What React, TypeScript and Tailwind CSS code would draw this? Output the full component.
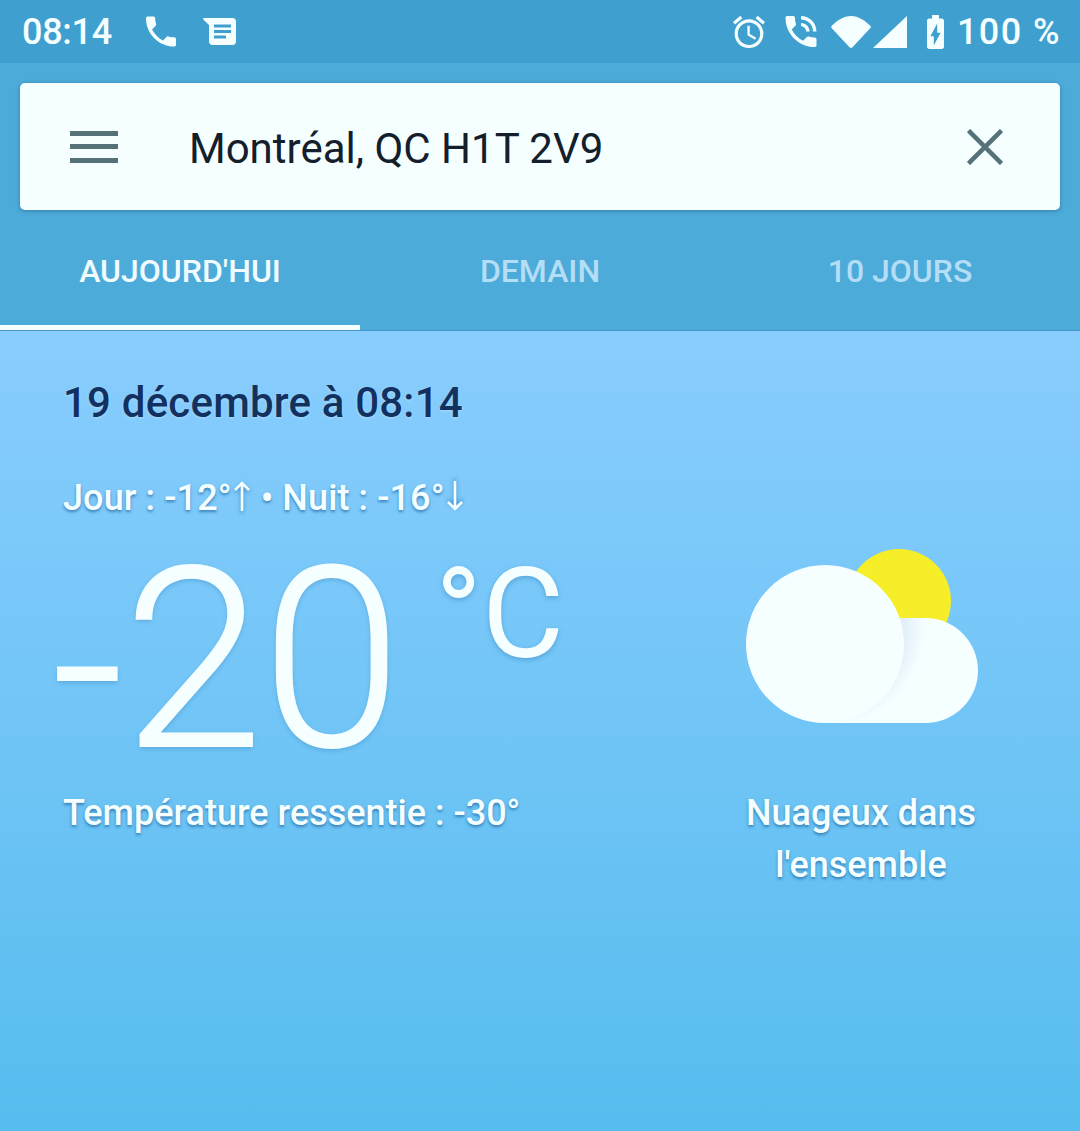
// Weather screen - Montréal, today tab

const TABS = ['AUJOURD\'HUI', 'DEMAIN', '10 JOURS']

function StatusBar() {
  return (
    <div className="flex h-[63px] items-center justify-between bg-[#3f9fcf] pl-[22px] pr-[21px] font-medium text-[#f5ffff]">
      <div className="flex items-center">
        <span className="w-[90px] text-[36px] leading-none tracking-[-0.3px]">08:14</span>
        <svg viewBox="3 3 18 18" className="ml-[34px] h-[31px] w-[30px] fill-current">
          <path d="M6.62 10.79c1.44 2.83 3.76 5.14 6.59 6.59l2.2-2.2c.27-.27.67-.36 1.02-.24 1.12.37 2.33.57 3.57.57.55 0 1 .45 1 1V20c0 .55-.45 1-1 1-9.39 0-17-7.61-17-17 0-.55.45-1 1-1h3.5c.55 0 1 .45 1 1 0 1.25.2 2.45.57 3.57.11.35.03.74-.25 1.02l-2.2 2.2z" />
        </svg>
        <svg viewBox="0 0 33 27" className="ml-[27px] h-[27px] w-[33px] fill-current">
          <path
            fillRule="evenodd"
            d="M1 0H29.500C31.500 0 33 1.500 33 3.500V23.500C33 25.500 31.500 27 29.500 27H9.500C7.500 27 6 25.500 6 23.500V7L.3 1.400C-.2.800.2 0 1 0ZM11 6.500V9.500H28V6.500ZM11 12V15H28V12ZM11 17.500V20.500H23V17.500Z"
          />
        </svg>
      </div>
      <div className="flex items-center">
        <svg viewBox="2 1.800 20 20.300" className="h-[34px] w-[32px] fill-current">
          <path d="M22 5.720l-4.600-3.860-1.290 1.530 4.600 3.860L22 5.720zM7.880 3.390L6.600 1.860 2 5.710l1.290 1.530 4.590-3.850zM12.500 8H11v6l4.750 2.850.75-1.230-4-2.370V8zM12 4c-4.970 0-9 4.030-9 9s4.030 9 9 9 9-4.030 9-9-4.030-9-9-9zm0 16c-3.870 0-7-3.130-7-7s3.130-7 7-7 7 3.130 7 7-3.130 7-7 7z" />
        </svg>
        <svg viewBox="3 3 18 18" className="ml-[20px] h-[31px] w-[32px] fill-current">
          <path d="M20 15.500c-1.250 0-2.450-.2-3.570-.57-.35-.11-.74-.03-1.020.24l-2.200 2.200c-2.830-1.440-5.150-3.750-6.590-6.590l2.200-2.210c.28-.26.36-.65.25-1C8.700 6.450 8.500 5.250 8.500 4c0-.55-.45-1-1-1H4c-.55 0-1 .45-1 1 0 9.390 7.610 17 17 17 .55 0 1-.45 1-1v-3.500c0-.55-.45-1-1-1zM19 12h2c0-4.970-4.030-9-9-9v2c3.870 0 7 3.130 7 7zm-4 0h2c0-2.760-2.240-5-5-5v2c1.660 0 3 1.340 3 3z" />
        </svg>
        <svg viewBox="0 0 40 32" className="ml-[14px] h-[32px] w-[40px] fill-current">
          <path d="M1 9.500C6 4.500 12.500 0 20 0S34 4.500 39 9.500C40 10.500 40 11.500 39.200 12.300L21.500 31.200C20.600 32.200 19.400 32.200 18.500 31.200L.8 12.300C0 11.500 0 10.500 1 9.500Z" />
        </svg>
        <svg viewBox="0 0 34 32" className="ml-[2px] h-[32px] w-[34px] fill-current">
          <path d="M34 0V32H0Z" />
        </svg>
        <svg viewBox="7 2 10 20" className="ml-[18px] h-[34px] w-[21px] fill-current">
          <path d="M15.670 4H14V2h-4v2H8.330C7.600 4 7 4.600 7 5.330v15.330C7 21.400 7.600 22 8.330 22h7.330c.74 0 1.340-.6 1.340-1.330V5.330C17 4.600 16.400 4 15.670 4zM11 20v-5.500H9L13 7v5.500h2L11 20z" />
        </svg>
        <span className="ml-[11px] w-[102px] whitespace-nowrap text-right text-[36px] leading-none tracking-[1.4px]">100 %</span>
      </div>
    </div>
  )
}

function SearchCard() {
  return (
    <div className="flex h-[127px] items-center rounded-[5px] bg-[#f5ffff] pl-[50px] pr-[57px] shadow-[0_1px_4px_rgba(20,70,110,0.45)]">
      <div className="flex h-[32px] w-[48px] flex-col justify-between">
        <span className="h-[5px] bg-[#567279]" />
        <span className="h-[5px] bg-[#567279]" />
        <span className="h-[5px] bg-[#567279]" />
      </div>
      <span className="ml-[71px] flex-1 pt-[5px] text-[42px] leading-none text-[#13202c]">
        Montréal, QC H1T 2V9
      </span>
      <svg viewBox="0 0 36 36" className="h-[36px] w-[36px] stroke-[#567279]" strokeWidth="4.500" fill="none">
        <path d="M1.500 1.500L34.500 34.500M34.500 1.500L1.500 34.500" />
      </svg>
    </div>
  )
}

function Tabs() {
  return (
    <div className="grid h-[121px] grid-cols-3 border-b border-[#4599c8]">
      {TABS.map((tab, i) => (
        <div
          key={tab}
          className={
            i === 0
              ? 'flex items-center justify-center border-b-[5px] border-[#f5ffff] pt-[6px] text-[#f0fcff]'
              : 'flex items-center justify-center border-b-[5px] border-transparent pt-[6px] text-[#b4def6]'
          }
        >
          <span className="text-[32px] font-medium leading-none">{tab}</span>
        </div>
      ))}
    </div>
  )
}

function TrendArrow({ down = false }: { down?: boolean }) {
  return (
    <svg
      viewBox="0 0 16 30"
      className={down ? 'mx-[2px] inline-block h-[30px] w-[16px] rotate-180 align-[-1px] drop-shadow-[0_2px_2px_rgba(30,100,160,0.6)]' : 'mx-[2px] inline-block h-[30px] w-[16px] align-[-1px] drop-shadow-[0_2px_2px_rgba(30,100,160,0.6)]'}
      fill="none"
      stroke="#f5ffff"
      strokeWidth="2.600"
    >
      <path d="M8 2V30M1 9L8 2L15 9" />
    </svg>
  )
}

function CloudIcon() {
  return (
    <svg viewBox="-1 0 233 174" className="h-[174px] w-[233px]">
      <defs>
        <radialGradient id="lobeShade" gradientUnits="userSpaceOnUse" cx="79" cy="78" r="100">
          <stop offset="0.79" stopColor="#e2eff9" />
          <stop offset="1" stopColor="#f5ffff" />
        </radialGradient>
      </defs>
      <circle cx="153" cy="52" r="52" fill="#f5ee28" />
      <path d="M79 174H179.500A52.500 52.500 0 0 0 179.500 69H79Z" fill="url(#lobeShade)" />
      <circle cx="79" cy="95" r="79" fill="#f5ffff" />
    </svg>
  )
}

export default function App() {
  const softShadow = '[text-shadow:0_2px_3px_rgba(30,100,160,0.7)]'
  return (
    <div className="flex h-[1131px] w-[1080px] flex-col overflow-hidden font-['Roboto',sans-serif]">
      <StatusBar />
      <div className="bg-[#4dabda]">
        <div className="px-[20px] pt-[20px]">
          <SearchCard />
        </div>
        <Tabs />
      </div>

      {/* Current conditions */}
      <div className="flex flex-1 bg-gradient-to-b from-[#88cdfe] to-[#55bdee]">
        <div className="flex-1 pl-[63px] pt-[48px]">
          <div className="text-[42px] font-medium leading-[48px] tracking-[0.2px] text-[#12315f] [text-shadow:0_1px_3px_rgba(255,255,255,0.3)]">
            19 décembre à 08:14
          </div>
          <div className={`mt-[49px] h-[44px] text-[36px] font-medium leading-[44px] tracking-[0.1px] text-[#f5ffff] ${softShadow}`}>
            Jour : -12°<TrendArrow /> • Nuit : -16°<TrendArrow down />
          </div>
          <div className="ml-[-11px] flex h-[267px] text-[#f5ffff] [text-shadow:0_2px_5px_rgba(40,110,170,0.4)]">
            <span className="pt-[7px] text-[250px] font-light leading-[267px] [-webkit-text-stroke:2px_#f5ffff]">
              <span className="inline-block translate-y-[6px]">-</span>20
            </span>
            <span className="ml-[34px] pt-[31px] text-[126px] font-normal leading-[126px]">°C</span>
          </div>
          <div className={`text-[36px] font-medium leading-[52px] text-[#f5ffff] ${softShadow}`}>
            Température ressentie : -30°
          </div>
        </div>
        <div className="mr-[69px] flex w-[300px] flex-col items-center pt-[218px]">
          <CloudIcon />
          <div className={`mt-[64px] text-center text-[36px] font-medium leading-[52px] text-[#f5ffff] ${softShadow}`}>
            Nuageux dans
            <br />
            l'ensemble
          </div>
        </div>
      </div>
    </div>
  )
}
